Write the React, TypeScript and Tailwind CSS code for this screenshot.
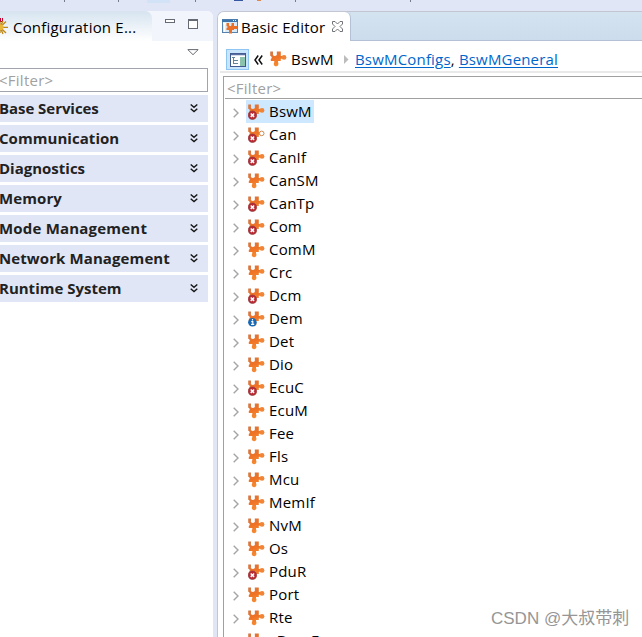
import React from 'react';

const sections = [
  { name: 'Base Services', track: 'tracking-[-0.05px]' },
  { name: 'Communication', track: 'tracking-[0.05px]' },
  { name: 'Diagnostics', track: 'tracking-[0px]' },
  { name: 'Memory', track: 'tracking-[0.1px]' },
  { name: 'Mode Management', track: 'tracking-[0.2px]' },
  { name: 'Network Management', track: 'tracking-[0.1px]' },
  { name: 'Runtime System', track: 'tracking-[0px]' },
];

type Badge = 'error' | 'info' | undefined;

const modules: { name: string; badge?: Badge; hollow?: boolean }[] = [
  { name: 'BswM', badge: 'error' },
  { name: 'Can', badge: 'error', hollow: true },
  { name: 'CanIf', badge: 'error' },
  { name: 'CanSM' },
  { name: 'CanTp', badge: 'error' },
  { name: 'Com', badge: 'error' },
  { name: 'ComM' },
  { name: 'Crc' },
  { name: 'Dcm', badge: 'error' },
  { name: 'Dem', badge: 'info' },
  { name: 'Det' },
  { name: 'Dio' },
  { name: 'EcuC', badge: 'error' },
  { name: 'EcuM' },
  { name: 'Fee' },
  { name: 'Fls' },
  { name: 'Mcu' },
  { name: 'MemIf' },
  { name: 'NvM' },
  { name: 'Os' },
  { name: 'PduR', badge: 'error' },
  { name: 'Port' },
  { name: 'Rte' },
  { name: 'vBaseE' },
];

function Puzzle({ badge, hollow }: { badge?: Badge; hollow?: boolean }) {
  return (
    <svg width="17" height="16" viewBox="0 0 17 16" className="shrink-0">
      <defs>
        <linearGradient id="orange" x1="0" y1="0" x2="0.3" y2="1">
          <stop offset="0" stopColor="#cf7a4c" />
          <stop offset="0.5" stopColor="#ef7224" />
          <stop offset="1" stopColor="#f58a32" />
        </linearGradient>
      </defs>
      <path
        d="M0.2 0.6H3V2.6C2.6 4 3.4 5 4.8 5C6.4 5 7.2 4 6.8 2.6V0.6H10.8V5.1H12.2V7.8H10.8V10H8V11.2C9 12.7 8.3 15.3 6.1 15.3C3.9 15.3 3.2 12.7 4.3 11.2V10H0.8V8C2.3 7.3 2.1 5.3 0.2 4.7Z"
        fill="url(#orange)"
      />
      {hollow ? (
        <circle cx="13.7" cy="6.4" r="2.3" fill="#fff" stroke="#c98b55" />
      ) : (
        <circle cx="14" cy="6.4" r="2.4" fill="#f28535" />
      )}
      {badge === 'error' && (
        <>
          <circle cx="4.4" cy="11.2" r="4.2" fill="#b92a34" stroke="#8f3a42" strokeWidth="0.7" />
          <path d="M2.7 9.5l3.4 3.4M6.1 9.5l-3.4 3.4" stroke="#fff" strokeWidth="1.5" />
        </>
      )}
      {badge === 'info' && (
        <>
          <circle cx="4.4" cy="11.2" r="4.3" fill="#1769b5" />
          <path d="M4.5 8.1v1.5M3.2 10.6h1.6v3M3 13.4h3.2" stroke="#fff" strokeWidth="1.2" fill="none" />
        </>
      )}
    </svg>
  );
}

function DoubleChevron() {
  return (
    <svg width="8" height="9" viewBox="0 0 8 9" fill="none" stroke="#161616" strokeWidth="1.4">
      <path d="M0.7 0.5L4 3.3L7.3 0.5M0.7 4.8L4 7.6L7.3 4.8" />
    </svg>
  );
}

function LeftPanel() {
  return (
    <section className="flex w-[213px] shrink-0 flex-col overflow-hidden rounded-tr-[6px] bg-white">
      <div className="flex h-[30px] shrink-0 bg-[#f3f5fc]">
        <div className="flex w-[152px] items-center overflow-hidden rounded-tr-[7px] bg-gradient-to-b from-[#d6e4f0] to-white">
          <svg width="8" height="19" viewBox="0 0 8 19" className="shrink-0">
            <path d="M0 1h1v3h1V1h1v4H0z" fill="#c4002f" />
            <path d="M0 4.5V16M0 10.3H8M0 10.3L6 4.5M0 10.3L6 16M0 10L3 4M0 10L3 17" stroke="#bd8615" strokeWidth="1.3" />
            <circle cx="0.5" cy="10.3" r="3" fill="#e8b63c" />
          </svg>
          <span className="ml-[5px] whitespace-nowrap pt-[2px] text-[15px] leading-5 tracking-[0.2px]">Configuration E...</span>
        </div>
        <div className="flex flex-1 gap-[13px] pl-[13px] pt-[8px]">
          <span className="h-[4px] w-[10px] border border-[#666a75] bg-white" />
          <span className="h-[10px] w-[10px] border border-t-[2px] border-[#666a75] bg-white" />
        </div>
      </div>
      <div className="flex h-[27px] shrink-0 justify-end pr-[14px] pt-[8px]">
        <svg width="12" height="7" viewBox="0 0 12 7">
          <path d="M0.8 0.6H11.2L6 5.7Z" fill="#fff" stroke="#676a72" />
        </svg>
      </div>
      <div className="flex h-[24px] w-[208px] shrink-0 items-center border border-l-0 border-[#a2a4ab] text-[15px] leading-5 text-[#a1a1a1]">
        <span className="-ml-px tracking-[0.25px]">&lt;Filter&gt;</span>
      </div>
      <div className="mt-[3px] flex w-[208px] flex-col gap-[3px]">
        {sections.map((s) => (
          <div key={s.name} className="flex h-[27px] items-center justify-between bg-[#e1e6f6] pr-[10px]">
            <span className={`-ml-px whitespace-nowrap pb-[2px] text-[15px] font-bold leading-5 text-[#222] ${s.track}`}>{s.name}</span>
            <DoubleChevron />
          </div>
        ))}
      </div>
    </section>
  );
}

function EditorIcon() {
  return (
    <svg width="16" height="15" viewBox="0 0 16 15" className="shrink-0">
      <rect x="0.5" y="0.5" width="15" height="13" fill="#d8eaf6" stroke="#5682af" />
      <path d="M0 0.5H16V3H0Z" fill="#3c76ad" />
      <path d="M11 1.5h1m1 0h1" stroke="#fff" />
      <path d="M1 4.5H4M2.5 4V13" stroke="#fff" strokeWidth="1.4" />
      <path d="M4.5 4H7V6C7 7.5 9.5 7.5 9.5 6V4H12V7H15.5V10H12V11H10V14.5H7V11H4.5V9L6 8L4.5 7Z" fill="#e97026" />
    </svg>
  );
}

function Toolbar() {
  return (
    <div className="flex h-[30px] shrink-0 items-center pl-[8px] pt-[7px] text-[15px] leading-5">
      <span className="flex h-[21px] w-[23px] shrink-0 items-center justify-center border border-[#8dc6f2] bg-[#c9e5fb]">
        <svg width="16" height="14" viewBox="0 0 16 14">
          <rect x="0.5" y="0.5" width="15" height="13" fill="#fff" stroke="#415a8d" />
          <path d="M1 1.5H15" stroke="#596fa3" strokeWidth="1.5" />
          <rect x="10" y="4" width="5" height="9" fill="#8bc3ad" />
          <path d="M2 4.5H5M4 7.5H8M4 10.5H8M3.5 5V11" stroke="#648598" />
        </svg>
      </span>
      <svg width="9" height="10" viewBox="0 0 9 10" className="ml-[5px] shrink-0" fill="none" stroke="#111" strokeWidth="1.5">
        <path d="M4.2 0.5L1 5L4.2 9.5M8.2 0.5L5 5L8.2 9.5" />
      </svg>
      <span className="ml-[7px] flex shrink-0 pb-px"><Puzzle /></span>
      <span className="ml-[4px] w-[43px] shrink-0 pb-[2px] tracking-[0.2px]">BswM</span>
      <svg width="5" height="9" viewBox="0 0 5 9" className="ml-[10px] shrink-0">
        <path d="M0 0L4.5 4.5L0 9Z" fill="#bcbcbc" />
      </svg>
      <span className="ml-[6px] whitespace-nowrap pb-[2px] tracking-[0.18px]">
        <span className="text-[#0066cc] underline underline-offset-2">BswMConfigs</span>,{' '}
        <span className="text-[#0066cc] underline underline-offset-2">BswMGeneral</span>
      </span>
    </div>
  );
}

function EditorPanel() {
  return (
    <section className="ml-[4px] flex min-w-0 flex-1 flex-col overflow-hidden rounded-tl-[7px] border-l border-t border-[#c3c6d0] bg-white">
      <div className="flex h-[29px] shrink-0 bg-[#cfdfee]">
        <div className="flex w-[133px] shrink-0 items-center rounded-tr-[6px] border-r border-[#b4c0d3] bg-white pl-[4px]">
          <EditorIcon />
          <span className="ml-[3px] w-[85px] whitespace-nowrap pt-[1px] text-[15px] leading-5 tracking-[0.2px]">Basic Editor</span>
          <svg width="11" height="11" viewBox="0 0 11 11" className="ml-[6px] shrink-0">
            <path d="M0.5 0.5H3L5.5 3L8 0.5H10.5V3L8 5.5L10.5 8V10.5H8L5.5 8L3 10.5H0.5V8L3 5.5L0.5 3Z" fill="#fff" stroke="#62656a" strokeWidth="0.9" />
          </svg>
        </div>
        <div className="flex-1 border-b border-[#b4c0d3] bg-gradient-to-b from-[#d4e3f0] to-[#ccdcec]" />
      </div>
      <Toolbar />
      <div className="ml-[2px] h-[2px] shrink-0 bg-[#e9e9e9]" />
      <div className="ml-[5px] mt-[3px] flex min-h-0 flex-1 flex-col overflow-hidden border-l border-t border-[#a0a0a0]">
        <div className="ml-px flex h-[22px] shrink-0 items-center border-b border-[#a0a0a0] pl-[2px] text-[15px] leading-5 tracking-[0.25px] text-[#a1a1a1]">
          &lt;Filter&gt;
        </div>
        <div className="mt-px">
          {modules.map((m, i) => (
            <div key={m.name} className="flex h-[23px] items-center pl-[9px]">
              <svg width="6" height="10" viewBox="0 0 6 10" fill="none" stroke="#a5a5a5" strokeWidth="1.4" className="mt-[2px] shrink-0">
                <path d="M0.7 0.8L5 5L0.7 9.2" />
              </svg>
              <div className={`ml-[7px] flex h-[23px] items-center pl-[2px] pr-[2px] ${i === 0 ? 'bg-[#cde8ff]' : ''}`}>
                <Puzzle badge={m.badge} hollow={m.hollow} />
                <span className="ml-[4px] whitespace-nowrap pb-[2px] text-[15px] leading-5 tracking-[0.2px]">{m.name}</span>
              </div>
            </div>
          ))}
        </div>
      </div>
    </section>
  );
}

export default function App() {
  return (
    <main className="relative flex h-[637px] w-[642px] flex-col overflow-hidden bg-[#e1e6f6] font-['Open_Sans','Noto_Sans_CJK_SC',sans-serif] text-black">
      <div className="flex h-[11px] shrink-0 items-start">
        <span className="ml-[64px] h-[2px] w-px bg-[#777b88]" />
        <span className="ml-[53px] h-[2px] w-px bg-[#777b88]" />
        <span className="ml-[28px] h-[3px] w-[23px] bg-[#d2e3f7]" />
        <span className="ml-[25px] h-[2px] w-px bg-[#777b88]" />
        <span className="ml-[38px] h-px w-[9px] bg-[#3558a0]" />
        <span className="ml-[14px] h-px w-[4px] bg-[#dc8850]" />
        <span className="ml-[34px] h-[2px] w-px bg-[#777b88]" />
        <span className="ml-[114px] h-[2px] w-px bg-[#777b88]" />
      </div>
      <div className="flex min-h-0 flex-1">
        <LeftPanel />
        <EditorPanel />
      </div>
      <div className="absolute left-[491px] top-[607px] whitespace-nowrap font-['Liberation_Sans','Noto_Sans_CJK_SC',sans-serif] text-[17px] leading-6 text-[#969696]">
        CSDN @大叔带刺
      </div>
    </main>
  );
}
